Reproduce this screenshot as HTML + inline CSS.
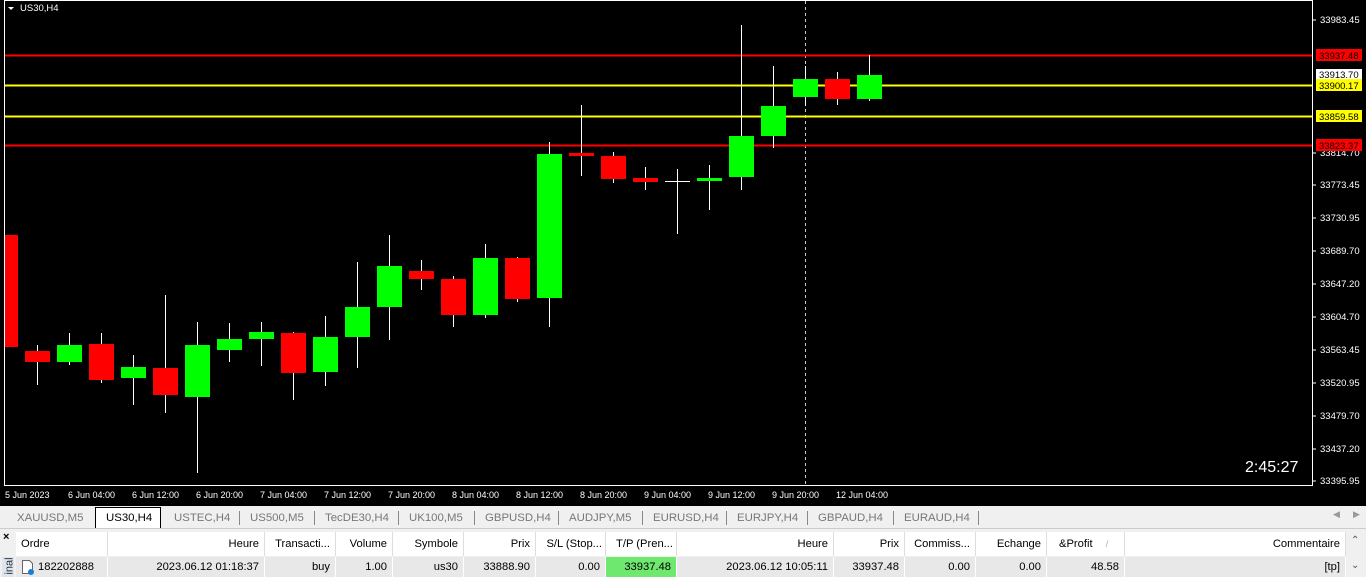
<!DOCTYPE html>
<html><head><meta charset="utf-8"><style>
body{margin:0;width:1366px;height:577px;overflow:hidden;background:#f0f0f0;font-family:"Liberation Sans",sans-serif;position:relative}
.t{position:absolute;font-size:12px;color:#000;white-space:nowrap}
.tab{position:absolute;top:509px;height:18px;font-size:11.4px;color:#777;line-height:18px;white-space:nowrap}
.sep{position:absolute;top:511px;width:1px;height:14px;background:#888}
.hd{position:absolute;top:532px;height:24px;background:#fff;border-right:1px solid #ddd;font-size:11.2px;line-height:24px;box-sizing:border-box;padding:0 5px;white-space:nowrap;overflow:hidden}
.rw{position:absolute;top:557px;height:20px;background:#e8e8e8;border-right:1px solid #fff;font-size:11.2px;line-height:20px;box-sizing:border-box;padding:0 5px;text-align:right;white-space:nowrap}
</style></head><body>
<svg width="1366" height="506" style="position:absolute;left:0;top:0" font-family="Liberation Sans" font-size="9">
<rect width="1366" height="506" fill="#000"/>
<rect x="4.5" y="0.5" width="1308" height="485" fill="none" stroke="#fff"/>
<line x1="805.5" y1="1" x2="805.5" y2="485" stroke="#ccc" stroke-dasharray="3,3"/>
<g fill="#fff" font-size="9.5">
<text x="1320" y="23">33983.45</text><text x="1320" y="156">33814.70</text><text x="1320" y="188">33773.45</text><text x="1320" y="221">33730.95</text><text x="1320" y="254">33689.70</text><text x="1320" y="287">33647.20</text><text x="1320" y="320">33604.70</text><text x="1320" y="353">33563.45</text><text x="1320" y="386">33520.95</text><text x="1320" y="419">33479.70</text><text x="1320" y="452">33437.20</text><text x="1320" y="484">33395.95</text>
</g>
<g stroke="#fff"><path d="M1312 20h4M1312 153h4M1312 185h4M1312 218h4M1312 251h4M1312 284h4M1312 317h4M1312 350h4M1312 383h4M1312 416h4M1312 449h4M1312 481h4"/></g>
<g fill="#fff" font-size="9"><text x="5" y="498">5 Jun 2023</text><text x="68" y="498">6 Jun 04:00</text><text x="132" y="498">6 Jun 12:00</text><text x="196" y="498">6 Jun 20:00</text><text x="260" y="498">7 Jun 04:00</text><text x="324" y="498">7 Jun 12:00</text><text x="388" y="498">7 Jun 20:00</text><text x="452" y="498">8 Jun 04:00</text><text x="516" y="498">8 Jun 12:00</text><text x="580" y="498">8 Jun 20:00</text><text x="644" y="498">9 Jun 04:00</text><text x="708" y="498">9 Jun 12:00</text><text x="772" y="498">9 Jun 20:00</text><text x="836" y="498">12 Jun 04:00</text></g>
<path d="M8 7h6l-3 3z" fill="#fff"/><text x="20" y="11" fill="#fff" font-size="9.5">US30,H4</text>
<g stroke-width="2"><line x1="5" y1="55.5" x2="1312" y2="55.5" stroke="#f00"/><line x1="5" y1="85.5" x2="1312" y2="85.5" stroke="#ff0"/><line x1="5" y1="116.5" x2="1312" y2="116.5" stroke="#ff0"/><line x1="5" y1="145.5" x2="1312" y2="145.5" stroke="#f00"/></g>
<g stroke="#fff" stroke-width="1">
<path d="M37.5 345V385M69.5 333V365M101.5 333V383M133.5 355V405M165.5 295V413M197.5 322V473M229.5 323V362M261.5 322V366M293.5 332V400M325.5 316V386M357.5 262V368M389.5 235V340M421.5 260V290M453.5 276V327M485.5 244V318M517.5 257V302M549.5 142V327M581.5 105V176M613.5 152V183M645.5 167V190M677.5 169V234M709.5 165V210M741.5 25V190M773.5 66V148M805.5 66V106M837.5 72V105M869.5 55V101"/>
</g>
<g fill="#f00"><rect x="5" y="235" width="13" height="112"/><rect x="25" y="351" width="25" height="11"/><rect x="89" y="344" width="25" height="36"/><rect x="153" y="368" width="25" height="27"/><rect x="281" y="333" width="25" height="40"/><rect x="409" y="271" width="25" height="8"/><rect x="441" y="279" width="25" height="36"/><rect x="505" y="258" width="25" height="41"/><rect x="569" y="153" width="25" height="3"/><rect x="601" y="156" width="25" height="23"/><rect x="633" y="178" width="25" height="4"/><rect x="825" y="79" width="25" height="20"/></g>
<g fill="#0f0"><rect x="57" y="345" width="25" height="17"/><rect x="121" y="367" width="25" height="11"/><rect x="185" y="345" width="25" height="52"/><rect x="217" y="339" width="25" height="11"/><rect x="249" y="332" width="25" height="7"/><rect x="313" y="337" width="25" height="35"/><rect x="345" y="307" width="25" height="30"/><rect x="377" y="266" width="25" height="41"/><rect x="473" y="258" width="25" height="57"/><rect x="537" y="154" width="25" height="144"/><rect x="697" y="178" width="25" height="3"/><rect x="729" y="136" width="25" height="41"/><rect x="761" y="106" width="25" height="30"/><rect x="793" y="79" width="25" height="18"/><rect x="857" y="75" width="25" height="24"/></g>
<rect x="665" y="181" width="25" height="1" fill="#fff"/>
<rect x="1316" y="49" width="46" height="12" fill="#f00"/><text x="1319" y="59" fill="#000" font-size="9.5">33937.48</text>
<rect x="1316" y="69" width="46" height="11" fill="#fff"/><text x="1319" y="78" fill="#000" font-size="9.5">33913.70</text>
<rect x="1316" y="79" width="46" height="12" fill="#ff0"/><text x="1319" y="89" fill="#000" font-size="9.5">33900.17</text>
<rect x="1316" y="110" width="46" height="12" fill="#ff0"/><text x="1319" y="120" fill="#000" font-size="9.5">33859.58</text>
<rect x="1316" y="139" width="46" height="12" fill="#f00"/><text x="1319" y="149" fill="#000" font-size="9.5">33823.37</text>
<text x="1245" y="472" fill="#fff" font-size="16">2:45:27</text>
</svg>
<div style="position:absolute;left:0;top:506px;width:1366px;height:22px;background:#f0f0f0;border-bottom:1px solid #ccc"></div>
<div style="position:absolute;left:95px;top:507px;width:66px;height:21px;background:#fff;border:1px solid #000;border-bottom:none;box-sizing:border-box"></div>
<div class="tab" style="left:17px">XAUUSD,M5</div><div class="tab" style="left:106px;color:#000">US30,H4</div><div class="tab" style="left:174px">USTEC,H4</div><div class="sep" style="left:239px"></div><div class="tab" style="left:250px">US500,M5</div><div class="sep" style="left:314px"></div><div class="tab" style="left:325px">TecDE30,H4</div><div class="sep" style="left:398px"></div><div class="tab" style="left:409px">UK100,M5</div><div class="sep" style="left:474px"></div><div class="tab" style="left:485px">GBPUSD,H4</div><div class="sep" style="left:558px"></div><div class="tab" style="left:569px">AUDJPY,M5</div><div class="sep" style="left:642px"></div><div class="tab" style="left:653px">EURUSD,H4</div><div class="sep" style="left:726px"></div><div class="tab" style="left:737px">EURJPY,H4</div><div class="sep" style="left:807px"></div><div class="tab" style="left:818px">GBPAUD,H4</div><div class="sep" style="left:893px"></div><div class="tab" style="left:904px">EURAUD,H4</div><div class="sep" style="left:978px"></div>
<div class="t" style="left:1333px;top:509px;color:#999;font-size:9px">◀</div><div class="t" style="left:1353px;top:509px;color:#999;font-size:9px">▶</div>
<div style="position:absolute;left:0;top:530px;width:16px;height:47px;background:#f0f0f0"></div>
<div class="t" style="left:3px;top:531px;font-weight:bold;font-size:11px">×</div>
<div style="position:absolute;left:2px;top:557px;width:12px;height:20px;background:#dde6f0"></div>
<div class="t" style="left:1px;top:560px;font-size:11px;transform:rotate(-90deg);transform-origin:center;color:#333">inal</div>
<div class="hd" style="left:16px;width:92px">Ordre</div><div class="hd" style="left:108px;width:157px;text-align:right">Heure</div><div class="hd" style="left:265px;width:71px;text-align:right">Transacti...</div><div class="hd" style="left:336px;width:57px;text-align:right">Volume</div><div class="hd" style="left:393px;width:71px;text-align:right">Symbole</div><div class="hd" style="left:464px;width:72px;text-align:right">Prix</div><div class="hd" style="left:536px;width:70px;text-align:right;padding:0 3px">S/L (Stop...</div><div class="hd" style="left:606px;width:71px;text-align:right;padding:0 3px">T/P (Pren...</div><div class="hd" style="left:677px;width:157px;text-align:right">Heure</div><div class="hd" style="left:834px;width:71px;text-align:right">Prix</div><div class="hd" style="left:905px;width:71px;text-align:right">Commiss...</div><div class="hd" style="left:976px;width:71px;text-align:right">Echange</div><div class="hd" style="left:1047px;width:78px;padding-left:12px">&amp;Profit <span style="color:#aaa;font-size:9px;padding-left:10px">/</span></div><div class="hd" style="left:1125px;width:221px;text-align:right">Commentaire</div>
<div class="rw" style="left:16px;width:92px;text-align:left;padding-left:22px">182202888</div>
<svg style="position:absolute;left:20px;top:559px" width="16" height="17"><path d="M2.5 1.5h7l3 3v10h-10z" fill="#fff" stroke="#666"/><circle cx="11" cy="13" r="3" fill="#1a7fd8"/></svg>
<div class="rw" style="left:108px;width:157px">2023.06.12 01:18:37</div><div class="rw" style="left:265px;width:71px">buy</div><div class="rw" style="left:336px;width:57px">1.00</div><div class="rw" style="left:393px;width:71px">us30</div><div class="rw" style="left:464px;width:72px">33888.90</div><div class="rw" style="left:536px;width:70px">0.00</div><div class="rw" style="left:606px;width:71px;background:#6ee86e">33937.48</div><div class="rw" style="left:677px;width:157px">2023.06.12 10:05:11</div><div class="rw" style="left:834px;width:71px">33937.48</div><div class="rw" style="left:905px;width:71px">0.00</div><div class="rw" style="left:976px;width:71px">0.00</div><div class="rw" style="left:1047px;width:78px">48.58</div><div class="rw" style="left:1125px;width:221px">[tp]</div>
<div style="position:absolute;left:1346px;top:532px;width:20px;height:45px;background:#f0f0f0"></div>
<div class="t" style="left:1351px;top:535px;font-size:10px;color:#555">⌃</div><div class="t" style="left:1351px;top:560px;font-size:10px;color:#555">⌄</div>
</body></html>
